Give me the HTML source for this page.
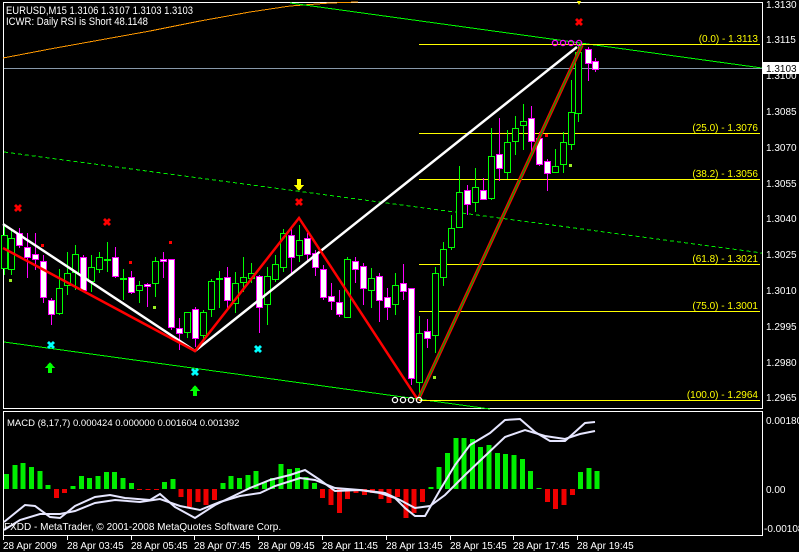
<!DOCTYPE html>
<html><head><meta charset="utf-8"><style>
html,body{margin:0;padding:0;background:#000;width:799px;height:552px;overflow:hidden}
svg{display:block}
text{font-family:"Liberation Sans",sans-serif;font-size:10px;fill:#fff}
</style></head><body>
<svg id="s" width="799" height="552" viewBox="0 0 799 552" xmlns="http://www.w3.org/2000/svg" shape-rendering="crispEdges">
<rect width="799" height="552" fill="#000"/>
<rect x="3.5" y="2.5" width="759" height="406" fill="none" stroke="#fff"/>
<rect x="3.5" y="411.5" width="759" height="124" fill="none" stroke="#fff"/>
<polyline points="3,58 50,49 100,40 150,31 200,21 250,12 290,6 330,3 358,2" fill="none" stroke="#ff9900" stroke-width="1"/>
<line x1="290" y1="3" x2="762" y2="68" stroke="#00ff00"/>
<line x1="4" y1="68.5" x2="762" y2="68.5" stroke="#8899aa"/>
<line x1="4" y1="152" x2="762" y2="253" stroke="#00ee00" stroke-dasharray="4,3"/>
<line x1="4" y1="342" x2="490" y2="409" stroke="#00ff00"/>
<g stroke="#ffff00">
<line x1="419" y1="44.5" x2="760" y2="44.5"/>
<line x1="419" y1="133.5" x2="760" y2="133.5"/>
<line x1="419" y1="179.5" x2="760" y2="179.5"/>
<line x1="419" y1="264.5" x2="760" y2="264.5"/>
<line x1="419" y1="311.5" x2="760" y2="311.5"/>
<line x1="419" y1="400.5" x2="760" y2="400.5"/>
</g>
<g text-anchor="end">
<text x="758" y="42" style="fill:#ff0">(0.0) - 1.3113</text>
<text x="758" y="131" style="fill:#ff0">(25.0) - 1.3076</text>
<text x="758" y="177" style="fill:#ff0">(38.2) - 1.3056</text>
<text x="758" y="262" style="fill:#ff0">(61.8) - 1.3021</text>
<text x="758" y="309" style="fill:#ff0">(75.0) - 1.3001</text>
<text x="758" y="398" style="fill:#ff0">(100.0) - 1.2964</text>
</g>
<g id="candles"></g>
<polyline points="3,224 195,351 577,47" fill="none" stroke="#fff" stroke-width="2.5" shape-rendering="auto"/>
<polyline points="3,248 195,351 299,218 418,400" fill="none" stroke="#ff0000" stroke-width="2.5" shape-rendering="auto"/>
<line x1="418" y1="400" x2="582" y2="45" stroke="#ff0000" stroke-width="3.6" shape-rendering="auto"/>
<line x1="418" y1="400" x2="582" y2="45" stroke="#00a000" stroke-width="1.4" shape-rendering="auto"/>
<g text-anchor="middle">
<text x="18" y="212" style="fill:#f00;font-weight:bold;font-size:11px">✖</text>
<text x="107" y="226" style="fill:#f00;font-weight:bold;font-size:11px">✖</text>
<text x="299" y="206" style="fill:#f00;font-weight:bold;font-size:11px">✖</text>
<text x="579" y="26" style="fill:#f00;font-weight:bold;font-size:11px">✖</text>
<text x="51" y="349" style="fill:#0ff;font-weight:bold;font-size:11px">✖</text>
<text x="258" y="353" style="fill:#0ff;font-weight:bold;font-size:11px">✖</text>
<text x="195" y="376" style="fill:#0ff;font-weight:bold;font-size:11px">✖</text>
</g>
<path d="M297,179h4v6h3l-5,6l-5,-6h3z" fill="#ffff00"/>
<path d="M577,1h4l-2,4z" fill="#ffff00"/>
<path d="M48,373v-5h-3l5,-6l5,6h-3v5z" fill="#00ff00"/>
<path d="M193,396v-5h-3l5,-6l5,6h-3v5z" fill="#00ff00"/>
<g fill="#ff0000">
<rect x="41" y="244" width="3" height="3"/><rect x="129" y="261" width="3" height="3"/><rect x="169" y="241" width="3" height="3"/><rect x="545" y="134" width="3" height="3"/>
</g>
<g fill="#99ee22">
<rect x="9" y="279" width="3" height="3"/><rect x="153" y="306" width="3" height="3"/><rect x="433" y="376" width="3" height="3"/><rect x="569" y="164" width="3" height="3"/>
</g>
<g fill="none" stroke="#ff00ff" stroke-width="1.3" shape-rendering="auto">
<circle cx="555" cy="43" r="2.6"/><circle cx="563" cy="43" r="2.6"/><circle cx="571" cy="43" r="2.6"/><circle cx="579" cy="43" r="2.6"/>
</g>
<g fill="none" stroke="#fff" stroke-width="1.3" shape-rendering="auto">
<circle cx="395" cy="400" r="2.6"/><circle cx="403" cy="400" r="2.6"/><circle cx="411" cy="400" r="2.6"/><circle cx="419" cy="400" r="2.6"/>
</g>
<text x="6" y="14" textLength="187" lengthAdjust="spacingAndGlyphs" style="font-size:11px">EURUSD,M15  1.3106 1.3107 1.3103 1.3103</text>
<text x="6" y="25" textLength="142" lengthAdjust="spacingAndGlyphs" style="font-size:11px">ICWR: Daily RSI is Short 48.1148</text>
<g>
<text x="766" y="8">1.3130</text>
<text x="766" y="43">1.3115</text>
<text x="766" y="79">1.3100</text>
<text x="766" y="115">1.3085</text>
<text x="766" y="151">1.3070</text>
<text x="766" y="187">1.3055</text>
<text x="766" y="222">1.3040</text>
<text x="766" y="258">1.3025</text>
<text x="766" y="294">1.3010</text>
<text x="766" y="330">1.2995</text>
<text x="766" y="366">1.2980</text>
<text x="766" y="401">1.2965</text>
</g>
<rect x="763" y="62" width="36" height="12" fill="#fff"/>
<text x="766" y="72" style="fill:#000">1.3103</text>
<g id="macd"></g>
<text x="7" y="426" style="font-size:9.5px">MACD  (8,17,7) 0.000424 0.000000 0.001604 0.001392</text>
<text x="766" y="424">0.00180</text>
<text x="766" y="493">0.00</text>
<text x="764" y="532">-0.00108</text>
<text x="4" y="530">FXDD - MetaTrader, © 2001-2008 MetaQuotes Software Corp.</text>
<g id="time"></g>
</svg>
<script>
var NS="http://www.w3.org/2000/svg";
function el(p,t,a){var e=document.createElementNS(NS,t);for(var k in a)e.setAttribute(k,a[k]);p.appendChild(e);return e;}
var C=[
[4,'g',235,268,225,275],[11,'g',238,269,230,275],[19,'w',233,245,228,248],[27,'w',247,257,233,278],[35,'w',254,259,233,270],
[43,'w',261,297,255,303],[51,'w',300,314,298,325],[59,'g',288,313,269,315],[67,'g',273,285,252,295],[75,'g',254,272,245,290],
[83,'w',257,290,255,292],[91,'g',267,281,255,292],[99,'g',257,269,252,273],[107,'g',259,260,242,272],[115,'w',257,276,247,278],
[123,'g',278,279,269,300],[131,'w',277,292,271,294],[139,'g',285,290,281,303],[147,'w',284,286,283,307],[155,'g',261,283,257,297],
[163,'w',259,261,252,278],[171,'w',259,327,259,330],[179,'w',328,333,318,350],[187,'g',312,332,312,338],[195,'w',309,338,307,347],
[203,'g',312,335,310,340],[211,'g',281,309,279,317],[219,'g',278,279,271,308],[227,'w',277,300,267,310],[235,'g',283,303,272,313],
[243,'g',277,282,257,292],[251,'g',273,278,263,283],[259,'w',276,307,275,333],[267,'g',276,304,267,325],[275,'g',264,279,255,282],
[283,'g',233,267,229,272],[291,'w',235,257,229,273],[299,'g',240,255,225,262],[307,'w',238,254,233,260],[315,'w',253,267,250,276],
[323,'w',269,297,265,300],[331,'w',296,301,283,310],[339,'w',302,314,290,317],[347,'g',259,317,257,318],[355,'w',261,269,257,283],
[363,'w',266,288,263,305],[371,'g',278,290,268,308],[379,'w',276,300,273,322],[387,'w',297,307,288,320],[395,'g',285,304,273,315],
[403,'w',283,291,264,300],[411,'w',288,378,288,385],[419,'g',333,382,316,397],[427,'w',331,338,319,348],[435,'g',273,335,267,353],
[443,'g',249,277,242,286],[451,'g',228,247,215,250],[459,'g',192,227,166,228],[467,'w',190,204,185,215],[475,'g',187,202,168,212],
[483,'w',190,199,178,200],[491,'g',156,198,128,200],[499,'w',154,168,118,181],[507,'g',142,172,130,179],[515,'g',128,141,116,155],
[523,'g',121,125,104,150],[531,'w',118,141,106,157],[539,'w',138,164,132,166],[547,'w',161,173,159,191],[555,'g',166,172,149,173],
[563,'g',142,164,132,173],[571,'g',112,144,80,150],[578,'g',52,113,44,122],[588,'w',49,63,47,81],[595,'w',61,69,58,72]];
var g=document.getElementById('candles');
C.forEach(function(c){
 var x=c[0], col=c[1]=='g'?'#00ff00':'#ff00ff', fill=c[1]=='g'?'#000':'#fff';
 el(g,'line',{x1:x+0.5,y1:c[4],x2:x+0.5,y2:c[5],stroke:col});
 var h=Math.max(c[3]-c[2],1);
 el(g,'rect',{x:x-2.5,y:c[2]+0.5,width:6,height:h,fill:fill,stroke:col,'stroke-width':1.2});
});
var H=[474,465,463,467,471,485,498,493,486,476,478,476,472,472,478,483,490,490,490,482,479,497,507,502,505,500,483,476,478,475,471,482,478,464,469,468,477,483,498,505,513,499,493,495,493,499,503,497,518,513,502,487,467,453,438,438,439,447,445,453,454,455,459,471,488,502,509,505,495,472,468,471];
var m=document.getElementById('macd'), z=489;
H.forEach(function(v,i){
 var x=4+i*8.32;
 var top=Math.min(v,z), h=Math.max(Math.abs(v-z),1);
 el(m,'rect',{x:x.toFixed(1),y:top,width:5,height:h,fill:v<z?'#00ee00':'#ee0000'});
});
var LA="4,522 25,505 35,506 50,517 60,518 75,506 95,497 110,495 125,498 150,500 160,494 175,507 195,518 215,505 250,488 270,480 290,475 305,470 320,480 335,491 360,490 380,493 395,498 405,508 415,516 425,516 440,490 455,465 470,445 490,433 505,420 520,419 535,432 550,441 565,441 575,432 585,423 595,422";
var LB="4,530 20,520 40,514 60,514 75,511 95,503 115,500 140,502 160,499 180,506 200,510 220,502 240,496 260,493 275,486 300,478 315,480 335,488 360,490 385,493 400,500 415,508 430,506 445,495 465,475 485,456 505,437 525,430 545,436 565,439 580,434 595,431";
el(m,'polyline',{points:LA,fill:'none',stroke:'#e6e6ff','stroke-width':2,'shape-rendering':'auto'});
el(m,'polyline',{points:LB,fill:'none',stroke:'#e6e6ff','stroke-width':2,'shape-rendering':'auto'});
var T=["28 Apr 2009","28 Apr 03:45","28 Apr 05:45","28 Apr 07:45","28 Apr 09:45","28 Apr 11:45","28 Apr 13:45","28 Apr 15:45","28 Apr 17:45","28 Apr 19:45"];
var tg=document.getElementById('time');
T.forEach(function(t,i){
 var x=3+i*63.8;
 el(tg,'line',{x1:Math.round(x)+0.5,y1:536,x2:Math.round(x)+0.5,y2:540,stroke:'#fff'});
 var tx=el(tg,'text',{x:Math.round(x),y:549});tx.textContent=t;
});
</script>
</body></html>
